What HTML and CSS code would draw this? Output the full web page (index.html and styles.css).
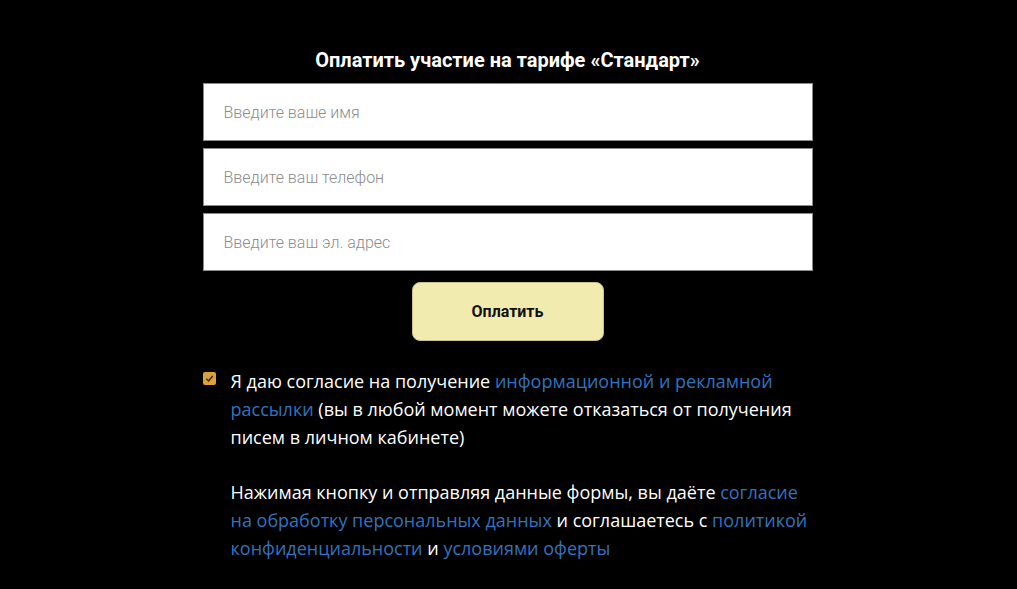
FILE: index.html
```html
<!DOCTYPE html>
<html lang="ru">
<head>
  <meta charset="UTF-8" />
  <title>Оплата участия</title>
  <link rel="stylesheet" href="styles.css">
</head>
<body>
  <form class="pay-form">
    <h2>Оплатить участие на тарифе «Стандарт»</h2>
    <input class="field" type="text" placeholder="Введите ваше имя" />
    <input class="field" type="tel" placeholder="Введите ваш телефон" />
    <input class="field" type="email" placeholder="Введите ваш эл. адрес" />
    <div class="actions">
      <button type="button" class="btn">Оплатить</button>
    </div>
    <div class="agree">
      <span class="check">
        <svg width="9" height="9" viewBox="0 0 10 10"><path d="M1.5 5.2 L4 7.6 L8.6 2.2" fill="none" stroke="#3a2a10" stroke-width="1.6"/></svg>
      </span>
      <div class="agree-text">
        <p>Я даю согласие на получение <a href="#">информационной и рекламной рассылки</a> (вы в любой момент можете отказаться от получения писем в личном кабинете)</p>
        <p>Нажимая кнопку и отправляя данные формы, вы даёте <a href="#">согласие на обработку персональных данных</a> и соглашаетесь с <a href="#">политикой конфиденциальности</a> и <a href="#">условиями оферты</a></p>
      </div>
    </div>
  </form>
</body>
</html>
```

FILE: styles.css
```css
body {
  margin: 0;
  padding-right: 2px;
  background: #000;
  font-family: Roboto, sans-serif;
}
.pay-form {
  width: 610px;
  margin: 0 auto;
  padding-top: 46px;
  display: flex;
  flex-direction: column;
  gap: 7px;
}
h2 {
  margin: 0 0 2px;
  color: #fff;
  font-size: 20px;
  font-weight: 700;
  text-align: center;
  line-height: 28px;
}
.field {
  box-sizing: border-box;
  height: 58px;
  border: 1px solid #8a8a8a;
  background: #fff;
  padding: 0 20px;
  font-family: Roboto, sans-serif;
  font-size: 16px;
  font-weight: 300;
  color: #333;
  outline: none;
}
.field::placeholder {
  color: #8c8c8c;
}
.actions {
  display: flex;
  justify-content: center;
  padding-top: 4px;
}
.btn {
  width: 192px;
  height: 59px;
  border: 1px solid #c9c08a;
  border-radius: 8px;
  background: #f2ebb0;
  font-family: Roboto, sans-serif;
  font-size: 16px;
  font-weight: 700;
  color: #111;
}
.agree {
  display: flex;
  gap: 15px;
  margin-top: 19px;
}
.check {
  flex: none;
  width: 13px;
  height: 13px;
  margin-top: 5px;
  border-radius: 2px;
  background: #d9a136;
  display: flex;
  align-items: center;
  justify-content: center;
}
.agree-text {
  font-family: "Open Sans", sans-serif;
  font-size: 18px;
  line-height: 28px;
  color: #fff;
}
.agree-text p {
  margin: 0 0 27px;
}
.agree-text a {
  color: #3273bf;
  text-decoration: none;
}
```
